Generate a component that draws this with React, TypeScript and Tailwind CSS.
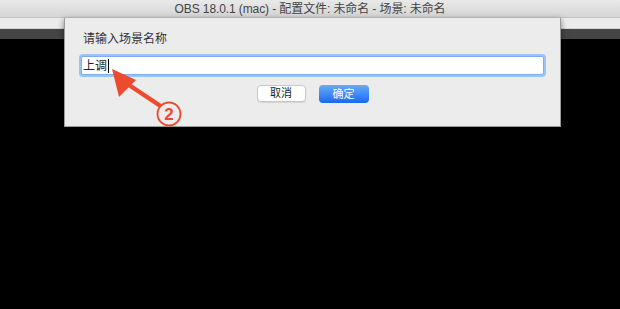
import React from "react";

const font = '"Liberation Sans", "Noto Sans CJK SC", sans-serif';

export default function App() {
  return (
    <div className="relative w-[620px] h-[309px] overflow-hidden bg-black" style={{ fontFamily: font }}>
      <div className="flex flex-col h-full">
        <div className="h-[18px] flex items-center justify-center bg-gradient-to-b from-[#e9e9e9] to-[#d5d5d5] border-b border-[#c4c4c4]">
          <span className="text-[12px] leading-none text-[#454545] tracking-[-0.1px]">OBS 18.0.1 (mac) - 配置文件: 未命名 - 场景: 未命名</span>
        </div>
        <div className="h-[11px] bg-[#ececec] border-b border-[#d8d8d8]" />
        <div className="h-[10px] bg-[#454545]" />
        <div className="flex-1 bg-black" />
      </div>

      {/* sheet dialog */}
      <div className="absolute left-[64px] top-[18px] w-[497px] h-[109px] bg-[#ececec] border-x border-b border-[#9a9a9a] shadow-[0_2px_6px_rgba(0,0,0,0.5)] px-4 pt-[14px] flex flex-col">
        <div className="pl-[2px] text-[12px] leading-[14px] text-[#333]">请输入场景名称</div>
        <div className="mt-[10px] h-[19px] bg-white border border-[#7eaef0] rounded-[2px] shadow-[0_0_0_2px_#9cc3f5] flex items-center pl-[1px]">
          <span className="text-[12px] leading-none text-[#222]">上调</span>
          <span className="w-[1px] h-[14px] bg-black ml-[1px]" />
        </div>
        <div className="mt-[10px] flex justify-center gap-[13px]">
          <button className="w-[49px] h-[17px] bg-white border border-[#c8c8c8] rounded-[4px] text-[11px] leading-none text-[#222] shadow-[0_1px_1px_rgba(0,0,0,0.1)]">取消</button>
          <button className="w-[50px] h-[18px] rounded-[4px] bg-gradient-to-b from-[#67aaf9] to-[#1669f3] text-[11px] leading-none text-white">确定</button>
        </div>
      </div>

      {/* annotation arrow */}
      <svg className="absolute left-0 top-0" width="620" height="309" viewBox="0 0 620 309">
        <line x1="159" y1="105" x2="126" y2="83" stroke="#ee4a2e" strokeWidth="4.5" strokeLinecap="round" />
        <polygon points="112,69 136,80 119,97" fill="#ee4a2e" />
        <circle cx="169" cy="114" r="11.5" fill="none" stroke="#ee4a2e" strokeWidth="1.8" />
        <text x="169" y="120" textAnchor="middle" fontSize="17" fontWeight="bold" fill="#ee4a2e" fontFamily='"Liberation Sans", sans-serif'>2</text>
      </svg>
    </div>
  );
}
